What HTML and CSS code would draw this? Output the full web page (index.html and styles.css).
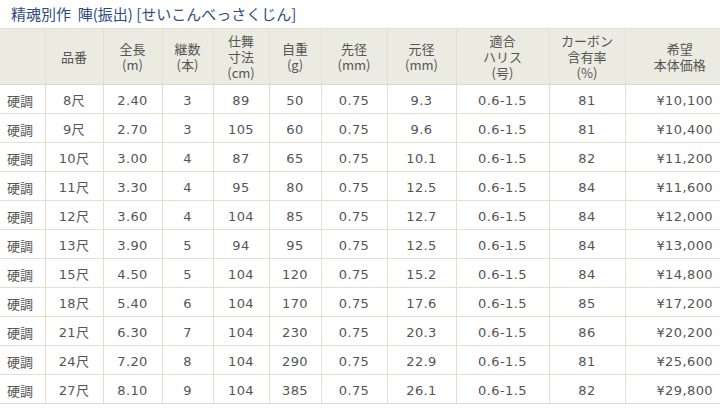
FILE: index.html
```html
<!DOCTYPE html>
<html lang="ja">
<head>
<meta charset="utf-8">
<link rel="stylesheet" href="styles.css">
</head>
<body>
<h1 class="title">精魂別作&nbsp; 陣(振出) [せいこんべっさくじん]</h1>
<table class="spec">
  <colgroup>
    <col class="c1"><col class="c2"><col class="c3"><col class="c4"><col class="c5"><col class="c6"><col class="c7"><col class="c8"><col class="c9"><col class="c10"><col class="c11">
  </colgroup>
  <thead>
    <tr>
      <th></th>
      <th>品番</th>
      <th>全長<br>(m)</th>
      <th>継数<br>(本)</th>
      <th>仕舞<br>寸法<br>(cm)</th>
      <th>自重<br>(g)</th>
      <th>先径<br>(mm)</th>
      <th>元径<br>(mm)</th>
      <th>適合<br>ハリス<br>(号)</th>
      <th>カーボン<br>含有率<br>(%)</th>
      <th class="price">希望<br>本体価格</th>
    </tr>
  </thead>
  <tbody>
    <tr><td class="kind">硬調</td><td>8尺</td><td>2.40</td><td>3</td><td>89</td><td>50</td><td>0.75</td><td>9.3</td><td>0.6-1.5</td><td>81</td><td class="price">¥10,100</td></tr>
    <tr><td class="kind">硬調</td><td>9尺</td><td>2.70</td><td>3</td><td>105</td><td>60</td><td>0.75</td><td>9.6</td><td>0.6-1.5</td><td>81</td><td class="price">¥10,400</td></tr>
    <tr><td class="kind">硬調</td><td>10尺</td><td>3.00</td><td>4</td><td>87</td><td>65</td><td>0.75</td><td>10.1</td><td>0.6-1.5</td><td>82</td><td class="price">¥11,200</td></tr>
    <tr><td class="kind">硬調</td><td>11尺</td><td>3.30</td><td>4</td><td>95</td><td>80</td><td>0.75</td><td>12.5</td><td>0.6-1.5</td><td>84</td><td class="price">¥11,600</td></tr>
    <tr><td class="kind">硬調</td><td>12尺</td><td>3.60</td><td>4</td><td>104</td><td>85</td><td>0.75</td><td>12.7</td><td>0.6-1.5</td><td>84</td><td class="price">¥12,000</td></tr>
    <tr><td class="kind">硬調</td><td>13尺</td><td>3.90</td><td>5</td><td>94</td><td>95</td><td>0.75</td><td>12.5</td><td>0.6-1.5</td><td>84</td><td class="price">¥13,000</td></tr>
    <tr><td class="kind">硬調</td><td>15尺</td><td>4.50</td><td>5</td><td>104</td><td>120</td><td>0.75</td><td>15.2</td><td>0.6-1.5</td><td>84</td><td class="price">¥14,800</td></tr>
    <tr><td class="kind">硬調</td><td>18尺</td><td>5.40</td><td>6</td><td>104</td><td>170</td><td>0.75</td><td>17.6</td><td>0.6-1.5</td><td>85</td><td class="price">¥17,200</td></tr>
    <tr><td class="kind">硬調</td><td>21尺</td><td>6.30</td><td>7</td><td>104</td><td>230</td><td>0.75</td><td>20.3</td><td>0.6-1.5</td><td>86</td><td class="price">¥20,200</td></tr>
    <tr><td class="kind">硬調</td><td>24尺</td><td>7.20</td><td>8</td><td>104</td><td>290</td><td>0.75</td><td>22.9</td><td>0.6-1.5</td><td>81</td><td class="price">¥25,600</td></tr>
    <tr><td class="kind">硬調</td><td>27尺</td><td>8.10</td><td>9</td><td>104</td><td>385</td><td>0.75</td><td>26.1</td><td>0.6-1.5</td><td>82</td><td class="price">¥29,800</td></tr>
  </tbody>
</table>
</body>
</html>
```
FILE: styles.css
```css
html, body {
  margin: 0;
  padding: 0;
  background: #ffffff;
}
body {
  font-family: "DejaVu Sans", "Noto Sans CJK JP", sans-serif;
  color: #555555;
  font-size: 13px;
}
.title {
  margin: 0;
  height: 28px;
  padding: 4px 0 0 11px;
  box-sizing: border-box;
  font-family: "Noto Sans CJK JP", sans-serif;
  font-weight: normal;
  font-size: 15px;
  line-height: 20px;
  color: #2e4b7d;
}
.spec {
  width: 720px;
  table-layout: fixed;
  border-collapse: collapse;
  border-top: 1px solid #e2dfcf;
  border-bottom: 1px solid #dcd9c3;
}
.c1 { width: 45px; }
.c2 { width: 58px; }
.c3 { width: 59px; }
.c4 { width: 51px; }
.c5 { width: 56px; }
.c6 { width: 52px; }
.c7 { width: 66px; }
.c8 { width: 69px; }
.c9 { width: 93px; }
.c10 { width: 76px; }
.c11 { width: 95px; }
.spec th {
  background: #ecebe1;
  font-family: "Noto Sans CJK JP", sans-serif;
  font-weight: normal;
  font-size: 13px;
  line-height: 16px;
  color: #555555;
  height: 55px;
  padding: 0;
  text-align: center;
  vertical-align: middle;
  border-left: 1px solid #e2e0d2;
  border-bottom: 1px solid #dcd9c3;
}
.spec th:first-child { border-left: none; }
.spec td {
  height: 24px;
  padding: 4px 0 0;
  line-height: 16px;
  text-align: center;
  vertical-align: middle;
  letter-spacing: 0.4px;
  border-left: 1px solid #e2dfcd;
  border-top: 1px solid #e2dfcd;
  white-space: nowrap;
}
.spec td:first-child { border-left: none; }
.spec td.kind {
  text-align: left;
  padding-left: 7px;
  font-family: "Noto Sans CJK JP", sans-serif;
  letter-spacing: 0;
}
.spec th.price { padding-left: 14px; }
.spec td.price {
  text-align: right;
  padding-right: 7px;
}
```
